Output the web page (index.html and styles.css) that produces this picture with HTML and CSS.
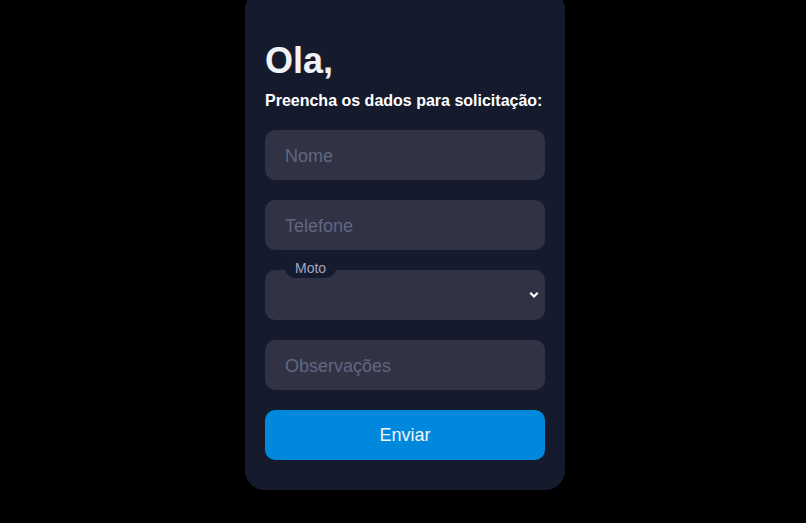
FILE: index.html
```html
<!DOCTYPE html>
<html lang="pt-BR">
<head>
<meta charset="utf-8">
<title>Solicitação</title>
<link rel="stylesheet" href="styles.css">
</head>
<body>
<main class="card">
  <h1 class="title">Ola,</h1>
  <p class="subtitle">Preencha os dados para solicitação:</p>
  <form class="form">
    <input class="field" type="text" placeholder="Nome">
    <input class="field" type="text" placeholder="Telefone">
    <div class="select-wrap">
      <span class="select-label">Moto</span>
      <select class="field select"><option></option></select>
      <svg class="chevron" width="10" height="8" viewBox="0 0 10 8"><path d="M1.3 1.8 L5 5.5 L8.7 1.8" fill="none" stroke="#ffffff" stroke-width="2.2"/></svg>
    </div>
    <input class="field" type="text" placeholder="Observações">
    <button class="submit" type="button">Enviar</button>
  </form>
</main>
</body>
</html>
```
FILE: styles.css
```css
html, body {
  margin: 0;
  padding: 0;
  background: #000000;
  height: 100%;
  overflow: hidden;
}
body {
  display: flex;
  justify-content: center;
  align-items: flex-start;
  padding-left: 4px;
  box-sizing: border-box;
  font-family: "Liberation Sans", Arial, sans-serif;
}
.card {
  width: 280px;
  margin-top: -10px;
  padding: 50px 20px 30px;
  background: #161a2d;
  border-radius: 20px;
}
.title {
  margin: 0 0 10px;
  font-size: 36px;
  font-weight: bold;
  color: #f2f2f4;
  line-height: normal;
}
.subtitle {
  margin: 0 0 20px;
  font-size: 16px;
  font-weight: bold;
  color: #ffffff;
  line-height: normal;
}
.form {
  display: flex;
  flex-direction: column;
  gap: 20px;
}
.field {
  box-sizing: border-box;
  width: 280px;
  height: 50px;
  border: none;
  outline: none;
  border-radius: 10px;
  background: #313244;
  padding: 3px 20px 0;
  font-family: "Liberation Sans", Arial, sans-serif;
  font-size: 18px;
  color: #e6e6ee;
}
.field::placeholder {
  color: #626681;
}
.select-wrap {
  position: relative;
  height: 50px;
}
.select {
  appearance: none;
  -webkit-appearance: none;
  display: block;
}
.select-label {
  position: absolute;
  top: -12px;
  left: 20px;
  padding: 0 10px;
  line-height: 20px;
  font-size: 14px;
  color: #a0a6c2;
  background: #161a2d;
  border-radius: 10px;
  z-index: 1;
}
.chevron {
  position: absolute;
  right: 6px;
  top: 21px;
  pointer-events: none;
}
.submit {
  height: 50px;
  border: none;
  border-radius: 10px;
  background: #0088dc;
  color: #f2f4f8;
  font-family: "Liberation Sans", Arial, sans-serif;
  font-size: 18px;
  padding-top: 2px;
  cursor: pointer;
}
```
